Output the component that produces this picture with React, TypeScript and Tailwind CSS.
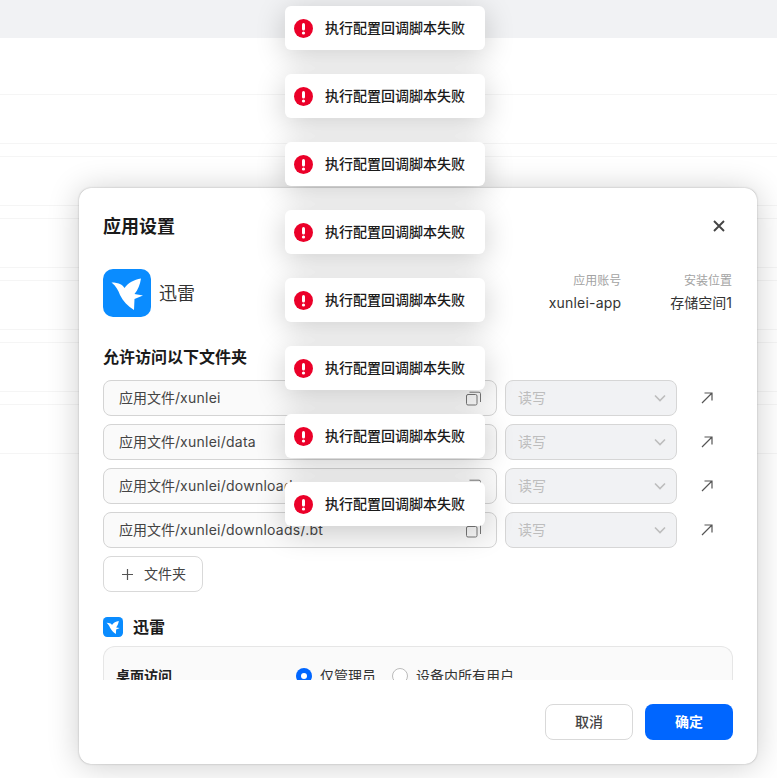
const CJK = "font-['Inter','Noto_Sans_CJK_SC',sans-serif]";

function Bird({ size }: { size: number }) {
  return (
    <svg width={size} height={size} viewBox="0 0 48 48" fill="none">
      <rect width="48" height="48" rx="10" fill="#0A8CFF" />
      <path
        d="M8.5 13.5 C12 13.5 15 14 18 15.5 C19.5 16.3 20.5 17.5 21.5 19 C25 14 31 10.5 38 9.5 C37 15.5 35 21 31.5 25 L40 26.5 L31.5 30 L31 41 C25 37.5 20 32 17 26 C15.5 21.5 13 17 8.5 13.5 Z"
        fill="#fff"
      />
    </svg>
  );
}

function Toast() {
  return (
    <div className="flex h-[44px] w-[200px] items-center rounded-md bg-white pl-[9px] shadow-[0_6px_30px_rgba(0,0,0,0.2)]">
      <svg width="19" height="19" viewBox="0 0 19 19">
        <circle cx="9.5" cy="9.5" r="9.5" fill="#EB0029" />
        <rect x="8" y="4" width="3" height="7.5" rx="1.5" fill="#fff" />
        <circle cx="9.5" cy="14" r="1.6" fill="#fff" />
      </svg>
      <span className="ml-[12px] text-[14px] font-medium leading-[20px] text-[#1a1a1a]">执行配置回调脚本失败</span>
    </div>
  );
}

function CopyIcon() {
  return (
    <svg width="15" height="15" viewBox="0 0 15 15" fill="none" stroke="#777" strokeWidth="1">
      <rect x="0.5" y="3.5" width="10.5" height="10.5" rx="1.5" />
      <path d="M3.5 1.2 H13 A1.5 1.5 0 0 1 14.5 2.7 V11" />
    </svg>
  );
}

function FolderRow({ path }: { path: string }) {
  return (
    <div className="flex items-center">
      <div className="flex h-[36px] w-[394px] items-center justify-between rounded-lg border border-[#d4d4d4] bg-[#fafafa] pl-[15px] pr-[15px] text-[14px] leading-[20px] text-[#444]">
        <span>
          应用文件/<span className="tracking-[0.25px]">{path}</span>
        </span>
        <CopyIcon />
      </div>
      <div className="ml-[8px] flex h-[36px] w-[172px] items-center justify-between rounded-lg border border-[#d6d6d6] bg-[#f1f2f4] pl-[12px] pr-[9px] text-[14px] leading-[20px] text-[#bdbdbd]">
        <span>读写</span>
        <svg width="14" height="14" viewBox="0 0 14 14" fill="none" stroke="#bdbdbd" strokeWidth="1.6">
          <path d="M2 4.5 L7 9.5 L12 4.5" />
        </svg>
      </div>
      <div className="ml-[24px] flex h-[14px] w-[12px] items-center justify-center">
        <svg width="12" height="12" viewBox="0 0 12 12" fill="none" stroke="#555" strokeWidth="1.2">
          <path d="M1 11 L11 1 M3.5 1 H11 V8.5" />
        </svg>
      </div>
    </div>
  );
}

function Divider({ className }: { className: string }) {
  return <div className={"border-b border-[#f5f5f5] " + className} />;
}

export default function App() {
  return (
    <div className={"relative h-[778px] w-[777px] overflow-hidden bg-white " + CJK}>
      <div className="h-[38px] bg-[#f1f2f4]" />
      <Divider className="h-[57px]" />
      {[0, 1, 2, 3, 4, 5].map((i) => (
        <div key={i}>
          <Divider className="h-[49px]" />
          {i < 5 && <Divider className="h-[13px]" />}
        </div>
      ))}

      {/* dialog */}
      <div className="absolute left-[79px] top-[188px] flex h-[576px] w-[678px] flex-col rounded-xl border border-white bg-white shadow-[0_0_2px_rgba(0,0,0,0.25),0_2px_32px_rgba(0,0,0,0.2)]">
        <div className="flex items-center justify-between pl-[23px] pr-[31px] pt-[26px]">
          <span className="text-[18px] font-semibold leading-[24px] text-[#1a1a1a]">应用设置</span>
          <svg width="12" height="12" viewBox="0 0 12 12" fill="none" stroke="#444" strokeWidth="1.9" className="-mt-[2px]">
            <path d="M1 1 L11 11 M11 1 L1 11" />
          </svg>
        </div>

        <div className="mt-[30px] flex items-center pl-[23px] pr-[24px]">
          <Bird size={48} />
          <span className="ml-[8px] text-[18px] text-[#333]">迅雷</span>
          <div className="ml-auto flex gap-[49px] text-right">
            <div>
              <div className="text-[12px] leading-[16px] text-[#a3a3a3]">应用账号</div>
              <div className="mt-[4px] text-[14px] leading-[20px] tracking-[0.2px] text-[#333]">xunlei-app</div>
            </div>
            <div>
              <div className="text-[12px] leading-[16px] text-[#a3a3a3]">安装位置</div>
              <div className="mt-[4px] text-[14px] leading-[20px] text-[#333]">存储空间1</div>
            </div>
          </div>
        </div>

        <div className="mt-[28px] pl-[23px] text-[16px] font-semibold leading-[24px] text-[#1a1a1a]">允许访问以下文件夹</div>

        <div className="mt-[11px] flex flex-col gap-[8px] pl-[23px]">
          <FolderRow path="xunlei" />
          <FolderRow path="xunlei/data" />
          <FolderRow path="xunlei/downloads" />
          <FolderRow path="xunlei/downloads/.bt" />
        </div>

        <div className="ml-[23px] mt-[8px] flex h-[36px] w-[100px] items-center justify-center gap-[11px] rounded-lg border border-[#d9d9d9] pl-[2px] text-[14px] leading-[20px] text-[#444]">
          <svg width="11" height="11" viewBox="0 0 11 11" fill="none" stroke="#555" strokeWidth="1.2">
            <path d="M5.5 0 V11 M0 5.5 H11" />
          </svg>
          <span>文件夹</span>
        </div>

        <div className="ml-[23px] mt-[25px] flex items-center gap-[10px]">
          <Bird size={20} />
          <span className="text-[16px] font-semibold leading-[20px] text-[#1a1a1a]">迅雷</span>
        </div>

        <div className="mx-[23px] mt-[9px] flex h-[34px] items-start overflow-hidden rounded-t-xl border-x border-t border-[#e6e6e6] bg-[#fafafa] pl-[12px] pt-[19px]">
          <span className="w-[180px] text-[14px] font-semibold leading-[20px] text-[#222]">桌面访问</span>
          <span className="flex items-center gap-[8px] text-[14px] leading-[20px] text-[#333]">
            <span className="flex h-[16px] w-[16px] items-center justify-center rounded-full bg-[#0066ff]">
              <span className="h-[6px] w-[6px] rounded-full bg-white" />
            </span>
            仅管理员
          </span>
          <span className="ml-[16px] flex items-center gap-[8px] text-[14px] leading-[20px] text-[#333]">
            <span className="h-[16px] w-[16px] rounded-full border border-[#bbb] bg-white" />
            设备内所有用户
          </span>
        </div>

        <div className="mt-[24px] flex justify-end gap-[12px] pr-[23px]">
          <div className="flex h-[36px] w-[88px] items-center justify-center rounded-lg border border-[#d9d9d9] text-[14px] font-medium leading-[20px] text-[#444]">取消</div>
          <div className="flex h-[36px] w-[88px] items-center justify-center rounded-lg bg-[#0066ff] text-[14px] font-semibold leading-[20px] text-white">确定</div>
        </div>
      </div>

      {/* toasts */}
      <div className="absolute left-[285px] top-[6px] flex flex-col gap-[24px]">
        {[0, 1, 2, 3, 4, 5, 6, 7].map((i) => (
          <Toast key={i} />
        ))}
      </div>
    </div>
  );
}
